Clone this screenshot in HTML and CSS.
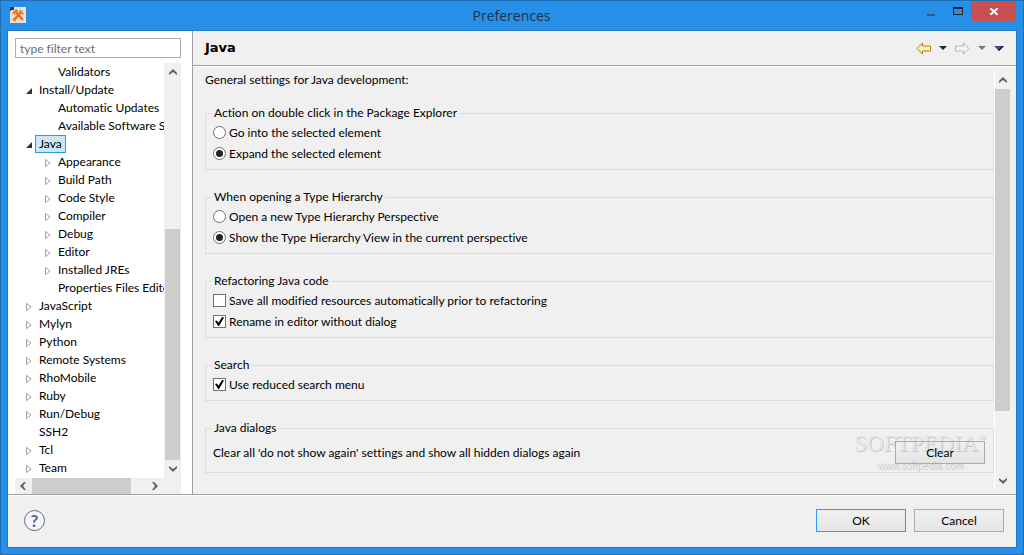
FILE: index.html
```html
<!DOCTYPE html>
<html lang="en">
<head>
    <meta charset="UTF-8">
    <meta name="viewport" content="width=device-width, initial-scale=1.0">
    <title>Preferences</title>
    <link rel="stylesheet" href="styles.css">
</head>
<body>

<div class="window">
    <!-- Title bar -->
    <header class="titlebar">
        <svg class="app-icon" width="16" height="16" viewBox="0 0 16 16">
            <rect width="16" height="16" fill="#eadfd6"/>
            <path d="M0 0h4v3H1v1H0z" fill="#333"/>
            <path d="M4 13l8-9M5 4l8 9" stroke="#ec6a17" stroke-width="2.4"/>
            <path d="M2 6l4-4 3 2-3 1-1 3zM10 2l1 3 3 1-1 2-4-3zM2 12l2-1 2 2-1 2z" fill="#f47b20"/>
        </svg>
        <h1 class="window-title">Preferences</h1>
        <div class="window-buttons">
            <button class="win-btn" aria-label="Minimize"><svg width="8" height="10" viewBox="0 0 8 10"><path d="M0 9h8" stroke="#2b5f93" stroke-width="2"/></svg></button>
            <button class="win-btn" aria-label="Maximize"><svg width="10" height="8" viewBox="0 0 10 8"><path d="M0 0h10v8H0zM1 2v5h8V2z" fill="#222" fill-rule="evenodd"/></svg></button>
            <button class="win-btn close" aria-label="Close"><svg width="8" height="7" viewBox="0 0 8 7"><path d="M0 0l8 7M8 0L0 7" stroke="#fff" stroke-width="2"/></svg></button>
        </div>
    </header>

    <div class="client">
        <div class="panes">
            <!-- Page tree -->
            <nav class="sidebar">
                <input class="filter" type="text" placeholder="type filter text" aria-label="Filter">
                <div class="tree-box">
                    <ul class="tree">
                        <li class="leaf level2">Validators</li>
                        <li class="open">Install/Update</li>
                        <li class="leaf level2">Automatic Updates</li>
                        <li class="leaf level2">Available Software Sites</li>
                        <li class="open"><span class="selected">Java</span></li>
                        <li class="closed level2">Appearance</li>
                        <li class="closed level2">Build Path</li>
                        <li class="closed level2">Code Style</li>
                        <li class="closed level2">Compiler</li>
                        <li class="closed level2">Debug</li>
                        <li class="closed level2">Editor</li>
                        <li class="closed level2">Installed JREs</li>
                        <li class="leaf level2">Properties Files Editor</li>
                        <li class="closed">JavaScript</li>
                        <li class="closed">Mylyn</li>
                        <li class="closed">Python</li>
                        <li class="closed">Remote Systems</li>
                        <li class="closed">RhoMobile</li>
                        <li class="closed">Ruby</li>
                        <li class="closed">Run/Debug</li>
                        <li class="leaf">SSH2</li>
                        <li class="closed">Tcl</li>
                        <li class="closed">Team</li>
                    </ul>
                    <div class="scroll vertical">
                        <svg class="arrow" viewBox="0 0 8 6"><path d="M0 6V4l4-4 4 4v2L4 3z"/></svg>
                        <div class="track"><div class="thumb tree-thumb"></div></div>
                        <svg class="arrow" viewBox="0 0 8 6"><path d="M0 0v2l4 4 4-4V0L4 3z"/></svg>
                    </div>
                    <div class="scroll horizontal">
                        <svg class="arrow side" viewBox="0 0 6 8"><path d="M6 0H4L0 4l4 4h2L3 4z"/></svg>
                        <div class="track"><div class="thumb wide-thumb"></div></div>
                        <svg class="arrow side" viewBox="0 0 6 8"><path d="M0 0h2l4 4-4 4H0l3-4z"/></svg>
                    </div>
                    <div class="scroll"></div>
                </div>
            </nav>

            <!-- Selected page -->
            <main class="page">
                <div class="page-header">
                    <h2>Java</h2>
                    <div class="history">
                        <button class="tool" aria-label="Back"><svg width="15" height="13" viewBox="0 0 15 13"><path d="M1 6.500L6.500 1v3h8v5h-8v3z" fill="#fdf0b4" stroke="#b97c10"/></svg></button>
                        <button class="tool" aria-label="Back history"><svg width="8" height="4" viewBox="0 0 8 4"><path d="M0 0h8L4 4z" fill="#222"/></svg></button>
                        <button class="tool" aria-label="Forward"><svg width="15" height="13" viewBox="0 0 15 13"><path d="M14 6.500L8.500 1v3h-8v5h8v3z" fill="#f4f4f0" stroke="#b4b4b4"/></svg></button>
                        <button class="tool" aria-label="Forward history"><svg width="8" height="4" viewBox="0 0 8 4"><path d="M0 0h8L4 4z" fill="#777"/></svg></button>
                        <button class="tool" aria-label="Menu"><svg width="10" height="5" viewBox="0 0 10 5"><path d="M0 0h10L5 5z" fill="#4a4789"/><path d="M10 0L5 5 4 4l4-4z" fill="#15142a"/></svg></button>
                    </div>
                </div>

                <div class="page-body">
                    <form class="settings">
                        <p class="intro">General settings for Java development:</p>

                        <fieldset>
                            <legend>Action on double click in the Package Explorer</legend>
                            <label><input type="radio" name="dblclick">Go into the selected element</label>
                            <label><input type="radio" name="dblclick" checked>Expand the selected element</label>
                        </fieldset>

                        <fieldset>
                            <legend>When opening a Type Hierarchy</legend>
                            <label><input type="radio" name="hierarchy">Open a new Type Hierarchy Perspective</label>
                            <label><input type="radio" name="hierarchy" checked>Show the Type Hierarchy View in the current perspective</label>
                        </fieldset>

                        <fieldset>
                            <legend>Refactoring Java code</legend>
                            <label><input type="checkbox">Save all modified resources automatically prior to refactoring</label>
                            <label><input type="checkbox" checked>Rename in editor without dialog</label>
                        </fieldset>

                        <fieldset>
                            <legend>Search</legend>
                            <label><input type="checkbox" checked>Use reduced search menu</label>
                        </fieldset>

                        <fieldset class="dialogs">
                            <legend>Java dialogs</legend>
                            <div class="clear-row">
                                <span>Clear all 'do not show again' settings and show all hidden dialogs again</span>
                                <button type="button" class="btn clear">Clear</button>
                            </div>
                            <div class="watermark">
                                <div class="brand">SOFTPEDIA<sup>™</sup></div>
                                <div class="site">www.softpedia.com</div>
                            </div>
                        </fieldset>
                    </form>
                    <div class="scroll vertical page-scroll">
                        <svg class="arrow" viewBox="0 0 8 6"><path d="M0 6V4l4-4 4 4v2L4 3z"/></svg>
                        <div class="track"><div class="thumb page-thumb"></div></div>
                        <svg class="arrow" viewBox="0 0 8 6"><path d="M0 0v2l4 4 4-4V0L4 3z"/></svg>
                    </div>
                </div>
            </main>
        </div>

        <footer class="footer">
            <button class="help" aria-label="Help">?</button>
            <button class="btn default">OK</button>
            <button class="btn">Cancel</button>
        </footer>
    </div>
</div>

</body>
</html>
```

FILE: styles.css
```css
* {
    box-sizing: border-box;
}
body {
    margin: 0;
    font-family: Lato, "Open Sans", sans-serif;
    font-size: 12px;
    line-height: 18px;
    font-variant-ligatures: none;
    color: #000;
}
button, input {
    font: inherit;
    color: inherit;
}
.window {
    display: flex;
    flex-direction: column;
    height: 100vh;
    padding: 0 7px 7px;
    background-color: #288fe8;
    border: 1px solid #1f6fb8;
}

/* Title bar */
.titlebar {
    display: flex;
    align-items: flex-start;
    height: 29px;
}
.app-icon {
    margin: 6px 0 0 2px;
}
.window-title {
    flex: 1;
    margin: 6px 0 0 80px;
    text-align: center;
    font-family: "Open Sans", sans-serif;
    font-size: 14px;
    font-weight: normal;
    color: #1f3347;
}
.window-buttons {
    display: flex;
}
.win-btn {
    display: flex;
    align-items: center;
    justify-content: center;
    width: 27px;
    height: 20px;
    padding: 0;
    border: none;
    background: none;
}
.win-btn.close {
    width: 45px;
    background-color: #c75050;
}

.client {
    flex: 1;
    display: flex;
    flex-direction: column;
    min-height: 0;
    background-color: #f0f0f0;
    border: 1px solid #2478c4;
    margin: 0 -1px -1px;
}
.panes {
    flex: 1;
    display: flex;
    min-height: 0;
    border-bottom: 1px solid #a0a0a0;
}

/* Tree */
.sidebar {
    display: flex;
    flex-direction: column;
    width: 185px;
    padding: 7px 11px 0 7px;
    background-color: #fff;
    border-right: 1px solid #a0a0a0;
}
.filter {
    height: 20px;
    width: 100%;
    padding: 0 4px;
    border: 1px solid #abadb3;
    background-color: #fff;
}
.filter::placeholder {
    color: #6d6d6d;
    opacity: 1;
}
.tree-box {
    flex: 1;
    display: grid;
    grid-template-columns: 1fr 17px;
    grid-template-rows: 1fr 16px;
    min-height: 0;
    margin-top: 5px;
}
.tree {
    margin: 0;
    padding: 0;
    list-style: none;
    overflow: hidden;
    white-space: nowrap;
    min-width: 0;
}
.tree li {
    display: flex;
    align-items: center;
    height: 18px;
    padding-left: 11px;
}
.tree li.level2 {
    padding-left: 30px;
}
.tree li::before {
    content: "";
    flex: none;
    width: 13px;
    height: 8px;
    margin-top: 2px;
}
.tree li.open::before {
    width: 6px;
    height: 6px;
    margin-right: 7px;
    background-color: #333;
    clip-path: polygon(100% 0, 100% 100%, 0 100%);
}
.tree li.closed::before {
    background: url("data:image/svg+xml,%3Csvg xmlns='http://www.w3.org/2000/svg' width='6' height='8'%3E%3Cpath d='M.5.5v7L5 4z' fill='none' stroke='%23a0a0a0'/%3E%3C/svg%3E") no-repeat;
}
.selected {
    margin-left: -4px;
    padding: 0 3px;
    line-height: 16px;
    background-color: #cbe8f6;
    border: 1px solid #26a0da;
}

/* Scroll bars */
.scroll {
    display: flex;
    align-items: center;
    background-color: #f0f0f0;
}
.scroll.vertical {
    flex-direction: column;
}
.scroll .arrow {
    flex: none;
    width: 8px;
    height: 6px;
    margin: 6px 0;
    fill: #606060;
}
.scroll .arrow.side {
    width: 6px;
    height: 8px;
    margin: 0 6px 0 5px;
}
.track {
    flex: 1;
    align-self: stretch;
}
.thumb {
    background-color: #cdcdcd;
}
.vertical .track {
    display: flex;
    flex-direction: column;
}
.tree-box .vertical .track {
    justify-content: flex-end;
}
.tree-thumb {
    height: 61%;
    width: 15px;
    margin: 0 auto;
}
.wide-thumb {
    width: 86%;
    height: 100%;
}
.page-scroll {
    width: 16px;
    border-left: 1px solid #fff;
}
.page-thumb {
    height: 84%;
    width: 15px;
}

/* Page */
.page {
    flex: 1;
    display: flex;
    flex-direction: column;
    min-width: 0;
}
.page-header {
    display: flex;
    align-items: center;
    justify-content: space-between;
    height: 35px;
    padding: 0 12px;
    border-bottom: 1px solid #a0a0a0;
}
.page-header h2 {
    margin: 0;
    font-family: "DejaVu Sans", sans-serif;
    font-size: 13px;
}
.history {
    display: flex;
    align-items: center;
    gap: 8px;
}
.tool {
    display: flex;
    padding: 0;
    border: none;
    background: none;
}
.page-body {
    flex: 1;
    display: flex;
    min-height: 0;
    padding: 4px 6px 4px 12px;
    border-top: 1px solid #fff;
}
.settings {
    flex: 1;
    min-width: 0;
}
.intro {
    margin: 0 0 15px;
}
fieldset {
    position: relative;
    margin: 0 0 18px;
    padding: 0 8px 5px 7px;
    border: 1px solid #dcdcdc;
}
legend {
    padding: 0 2px;
    margin-left: -1px;
}
fieldset label {
    display: flex;
    align-items: center;
    height: 21px;
}
fieldset input {
    appearance: none;
    display: grid;
    place-content: center;
    width: 13px;
    height: 13px;
    margin: 0 3px 0 0;
    background-color: #fff;
    border: 1px solid #707070;
}
fieldset input[type="radio"] {
    border-radius: 50%;
}
fieldset input[type="radio"]:checked::before {
    content: "";
    width: 7px;
    height: 7px;
    border-radius: 50%;
    background-color: #222;
}
fieldset input[type="checkbox"]:checked::before {
    content: "";
    width: 9px;
    height: 9px;
    background-color: #000;
    clip-path: polygon(0 45%, 20% 40%, 38% 65%, 80% 0, 100% 5%, 45% 100%, 35% 100%);
}
.clear-row {
    display: flex;
    align-items: center;
    justify-content: space-between;
    padding: 4px 0 3px;
}
.btn {
    width: 90px;
    height: 23px;
    padding: 0;
    border: 1px solid #acacac;
    background: linear-gradient(#f0f0f0, #e5e5e5);
}
.btn.default {
    border-color: #3399ff;
}
.btn.clear {
    position: relative;
    z-index: 1;
    background: linear-gradient(rgba(0, 0, 0, 0), rgba(0, 0, 0, 0.05));
}

/* Watermark around the button */
.watermark {
    position: absolute;
    top: -6px;
    right: 7px;
    text-align: center;
    pointer-events: none;
    color: #e6e6e6;
    text-shadow: 1px 1px 0 #c8c8c8;
}
.brand {
    font-family: "Liberation Serif", serif;
    font-size: 23px;
    line-height: 26px;
}
.brand sup {
    font-size: 8px;
    vertical-align: 10px;
    line-height: 1;
}
.site {
    font-family: "Liberation Sans", sans-serif;
    font-size: 10px;
}

/* Footer */
.footer {
    display: flex;
    align-items: center;
    gap: 8px;
    height: 52px;
    padding: 0 12px 2px 16px;
    border-top: 1px solid #fff;
}
.help {
    width: 21px;
    height: 21px;
    margin-right: auto;
    padding: 0;
    border: 1px solid #5a6b8c;
    border-radius: 50%;
    background-color: #f4f6fa;
    color: #4f6488;
    font-size: 17px;
    font-weight: bold;
    line-height: 18px;
}
```
